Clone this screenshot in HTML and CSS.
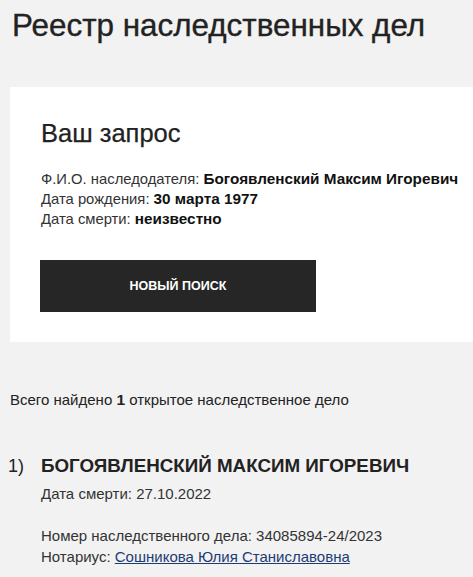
FILE: index.html
```html
<!DOCTYPE html>
<html lang="ru">
<head>
<meta charset="utf-8">
<link rel="stylesheet" href="styles.css">
</head>
<body>
<h1 class="page-title">Реестр наследственных дел</h1>
<section class="query-card">
  <h2 class="query-title">Ваш запрос</h2>
  <div class="query-info">
    <div>Ф.И.О. наследодателя: <b>Богоявленский Максим Игоревич</b></div>
    <div>Дата рождения: <b>30 марта 1977</b></div>
    <div>Дата смерти: <b>неизвестно</b></div>
  </div>
  <button class="new-search">НОВЫЙ ПОИСК</button>
</section>
<p class="summary">Всего найдено <b>1</b> открытое наследственное дело</p>
<ol class="results">
  <li class="result">
    <span class="num">1)</span>
    <div class="result-body">
      <h3 class="result-name">БОГОЯВЛЕНСКИЙ МАКСИМ ИГОРЕВИЧ</h3>
      <div class="result-death">Дата смерти: 27.10.2022</div>
      <div class="result-case">Номер наследственного дела: 34085894-24/2023</div>
      <div>Нотариус: <a href="#" class="notary">Сошникова Юлия Станиславовна</a></div>
    </div>
  </li>
</ol>
</body>
</html>
```
FILE: styles.css
```css
html, body {
  margin: 0;
  padding: 0;
  background: #f2f2f2;
  color: #222;
  font-family: "Liberation Sans", Arial, sans-serif;
}
body {
  padding: 0 0 0 10px;
}
.page-title {
  margin: 0;
  padding: 8px 0 0 2px;
  font-size: 31.4px;
  font-weight: normal;
  line-height: 36px;
  color: #222;
  -webkit-text-stroke: 0.35px #222;
}
.query-card {
  margin-top: 43px;
  background: #fff;
  padding: 32px 0 30px 31px;
}
.query-title {
  margin: 0;
  font-size: 25.5px;
  font-weight: normal;
  line-height: 28px;
  -webkit-text-stroke: 0.25px #222;
}
.query-info {
  margin-top: 22px;
  font-size: 14.8px;
  line-height: 20px;
  color: #333;
  white-space: nowrap;
}
.query-info b {
  color: #111;
  font-size: 15.3px;
}
.new-search {
  display: flex;
  align-items: center;
  justify-content: center;
  margin-top: 31px;
  margin-left: -1px;
  width: 276px;
  height: 52px;
  border: 0;
  background: #262626;
  color: #fff;
  font-family: "Liberation Sans", Arial, sans-serif;
  font-weight: bold;
  font-size: 12.5px;
}
.summary {
  margin: 49px 0 0 0;
  font-size: 15px;
  line-height: 18px;
}
.summary b {
  font-size: 15.5px;
}
.results {
  list-style: none;
  margin: 45px 0 0 -2px;
  padding: 0;
}
.result {
  display: flex;
}
.num {
  width: 33px;
  font-size: 18px;
  line-height: 24px;
}
.result-body {
  font-size: 15px;
  line-height: 21px;
  color: #333;
}
.result-name {
  margin: 0;
  font-size: 18.8px;
  line-height: 24px;
  color: #222;
}
.result-death {
  margin-top: 5px;
}
.result-case {
  margin-top: 21px;
}
.notary {
  color: #1d3c73;
}
```
